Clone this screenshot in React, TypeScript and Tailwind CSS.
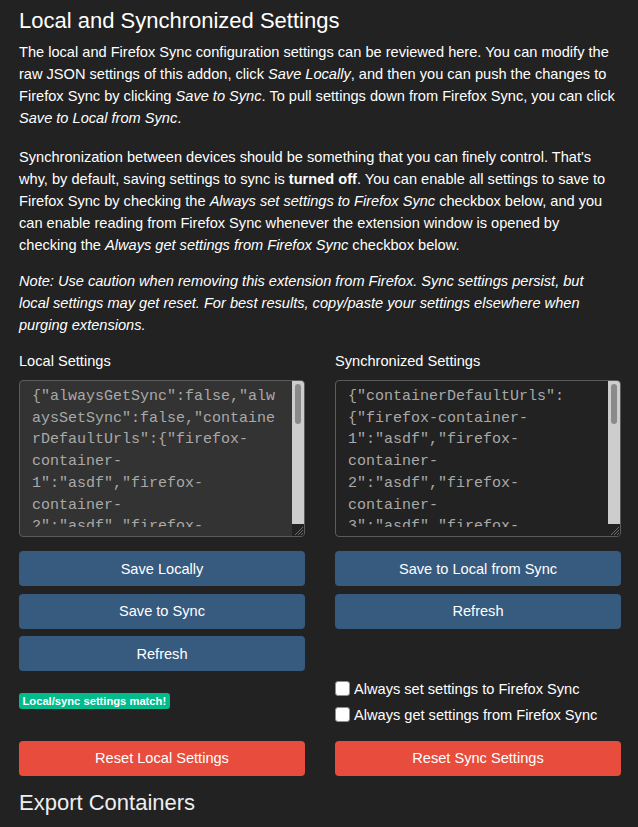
const localLines = [
  '{"alwaysGetSync":false,"alw',
  'aysSetSync":false,"containe',
  'rDefaultUrls":{"firefox-',
  'container-',
  '1":"asdf","firefox-',
  'container-',
  '2":"asdf","firefox-',
];

const syncLines = [
  '{"containerDefaultUrls":',
  '{"firefox-container-',
  '1":"asdf","firefox-',
  'container-',
  '2":"asdf","firefox-',
  'container-',
  '3":"asdf","firefox-',
];

function JsonBox({ lines, dark }: { lines: string[]; dark?: boolean }) {
  return (
    <div
      className={`h-[157px] flex border border-[#5b5b5b] rounded-[4px] overflow-hidden ${
        dark ? 'bg-[#222222]' : 'bg-[#333333]'
      }`}
    >
      <div className="flex-1 h-[146px] overflow-hidden pl-[12px] pt-[5px] font-['Liberation_Mono',monospace] text-[15px] leading-[21.7px] text-[#a9a9a9] whitespace-pre">
        {lines.map((l, i) => (
          <div key={i}>{l}</div>
        ))}
      </div>
      <div className="w-[12px] flex flex-col">
        <div className="h-[143px] bg-[#cdcdcd] px-[3px] pt-[3px]">
          <div className="h-[40px] rounded-full bg-[#8a8a8a]" />
        </div>
        <div className="flex-1 bg-[#222222] flex items-end justify-end">
          <svg width="12" height="12" viewBox="0 0 12 12">
            <path d="M11 3 L3 11 M11 6 L6 11 M11 9 L9 11" stroke="#6b6b6b" strokeWidth="1" />
          </svg>
        </div>
      </div>
    </div>
  );
}

function Btn({ children, danger }: { children: React.ReactNode; danger?: boolean }) {
  return (
    <button
      className={`h-[35px] w-full rounded-[4px] text-white text-[14.6px] ${
        danger ? 'bg-[#e74c3c]' : 'bg-[#375a7f]'
      }`}
    >
      {children}
    </button>
  );
}

function Check({ label }: { label: string }) {
  return (
    <label className="flex items-center h-[22px] leading-[22px]">
      <span className="w-[15px] h-[15px] bg-white border border-[#8f8f8f] rounded-[3px] mr-[4px] shrink-0" />
      <span>{label}</span>
    </label>
  );
}

export default function App() {
  return (
    <div className="min-h-[827px] bg-[#222222] text-white font-['Liberation_Sans',Arial,sans-serif] text-[14.6px] leading-[22px]">
      <div className="w-[602px] ml-[19px] pt-[8px]">
        <h1 className="text-[22px] leading-[26px] font-normal">Local and Synchronized Settings</h1>

        <p className="mt-[7px]">
          The local and Firefox Sync configuration settings can be reviewed here. You can modify the
          <br />
          raw JSON settings of this addon, click <em>Save Locally</em>, and then you can push the changes to
          <br />
          Firefox Sync by clicking <em>Save to Sync</em>. To pull settings down from Firefox Sync, you can click
          <br />
          <em>Save to Local from Sync</em>.
        </p>

        <p className="mt-[17px]">
          Synchronization between devices should be something that you can finely control. That's
          <br />
          why, by default, saving settings to sync is <strong>turned off</strong>. You can enable all settings to
          save to
          <br />
          Firefox Sync by checking the <em>Always set settings to Firefox Sync</em> checkbox below, and you
          <br />
          can enable reading from Firefox Sync whenever the extension window is opened by
          <br />
          checking the <em>Always get settings from Firefox Sync</em> checkbox below.
        </p>

        <p className="mt-[14px] italic">
          Note: Use caution when removing this extension from Firefox. Sync settings persist, but
          <br />
          local settings may get reset. For best results, copy/paste your settings elsewhere when
          <br />
          purging extensions.
        </p>

        <div className="grid grid-cols-2 gap-x-[30px] mt-[14px] items-start">
          <div className="flex flex-col">
            <div>Local Settings</div>
            <div className="mt-[8px]">
              <JsonBox lines={localLines} />
            </div>
            <div className="mt-[14px] flex flex-col gap-[7.5px]">
              <Btn>Save Locally</Btn>
              <Btn>Save to Sync</Btn>
              <Btn>Refresh</Btn>
            </div>
            <div className="mt-[22px] flex">
              <span className="h-[16px] leading-[16px] px-[3.5px] rounded-[3px] bg-[#00bc8c] text-white text-[11.2px] font-bold">
                Local/sync settings match!
              </span>
            </div>
          </div>
          <div className="flex flex-col">
            <div>Synchronized Settings</div>
            <div className="mt-[8px]">
              <JsonBox lines={syncLines} dark />
            </div>
            <div className="mt-[14px] flex flex-col gap-[7.5px]">
              <Btn>Save to Local from Sync</Btn>
              <Btn>Refresh</Btn>
            </div>
            <div className="mt-[49px] flex flex-col gap-[4px]">
              <Check label="Always set settings to Firefox Sync" />
              <Check label="Always get settings from Firefox Sync" />
            </div>
          </div>
        </div>

        <div className="grid grid-cols-2 gap-x-[30px] mt-[15px]">
          <Btn danger>Reset Local Settings</Btn>
          <Btn danger>Reset Sync Settings</Btn>
        </div>

        <h2 className="mt-[14px] text-[22px] leading-[26px] font-normal text-[#eeeeee]">Export Containers</h2>
      </div>
    </div>
  );
}
